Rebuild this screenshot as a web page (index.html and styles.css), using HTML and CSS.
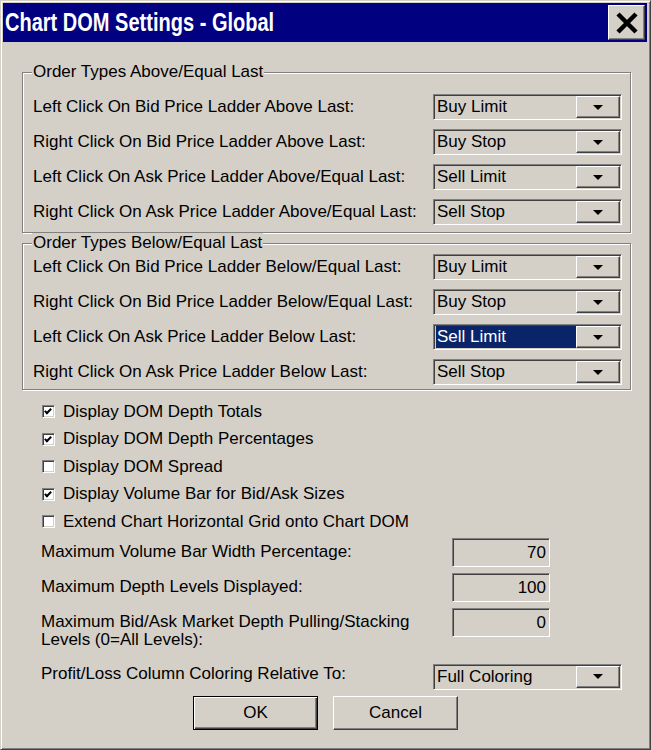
FILE: index.html
```html
<!doctype html>
<html>

<head>
    <link rel="stylesheet" href="styles.css">
</head>

<body>
    <div class="dialog">
        <div class="titlebar">
            <span class="title">Chart DOM Settings - Global</span>
            <span class="close">
                <svg width="22" height="22" viewBox="0 0 22 22">
                    <path d="M2 2 L20 20 M20 2 L2 20" stroke="#000" stroke-width="4.5" fill="none" />
                </svg>
            </span>
        </div>

        <div class="content">
            <fieldset class="group group-above">
                <legend>Order Types Above/Equal Last</legend>
                <div class="row">
                    <span class="label">Left Click On Bid Price Ladder Above Last:</span>
                    <span class="combo"><span class="combo-text">Buy Limit</span><span class="combo-btn"><i class="arrow"></i></span></span>
                </div>
                <div class="row">
                    <span class="label">Right Click On Bid Price Ladder Above Last:</span>
                    <span class="combo"><span class="combo-text">Buy Stop</span><span class="combo-btn"><i class="arrow"></i></span></span>
                </div>
                <div class="row">
                    <span class="label">Left Click On Ask Price Ladder Above/Equal Last:</span>
                    <span class="combo"><span class="combo-text">Sell Limit</span><span class="combo-btn"><i class="arrow"></i></span></span>
                </div>
                <div class="row">
                    <span class="label">Right Click On Ask Price Ladder Above/Equal Last:</span>
                    <span class="combo"><span class="combo-text">Sell Stop</span><span class="combo-btn"><i class="arrow"></i></span></span>
                </div>
            </fieldset>

            <fieldset class="group group-below">
                <legend>Order Types Below/Equal Last</legend>
                <div class="row">
                    <span class="label">Left Click On Bid Price Ladder Below/Equal Last:</span>
                    <span class="combo"><span class="combo-text">Buy Limit</span><span class="combo-btn"><i class="arrow"></i></span></span>
                </div>
                <div class="row">
                    <span class="label">Right Click On Bid Price Ladder Below/Equal Last:</span>
                    <span class="combo"><span class="combo-text">Buy Stop</span><span class="combo-btn"><i class="arrow"></i></span></span>
                </div>
                <div class="row">
                    <span class="label">Left Click On Ask Price Ladder Below Last:</span>
                    <span class="combo"><span class="combo-text selected">Sell Limit</span><span class="combo-btn"><i class="arrow"></i></span></span>
                </div>
                <div class="row">
                    <span class="label">Right Click On Ask Price Ladder Below Last:</span>
                    <span class="combo"><span class="combo-text">Sell Stop</span><span class="combo-btn"><i class="arrow"></i></span></span>
                </div>
            </fieldset>

            <div class="checks">
                <div class="check"><span class="box on"></span>Display DOM Depth Totals</div>
                <div class="check"><span class="box on"></span>Display DOM Depth Percentages</div>
                <div class="check"><span class="box"></span>Display DOM Spread</div>
                <div class="check"><span class="box on"></span>Display Volume Bar for Bid/Ask Sizes</div>
                <div class="check"><span class="box"></span>Extend Chart Horizontal Grid onto Chart DOM</div>
            </div>

            <div class="fields">
                <div class="field">
                    <span class="field-label">Maximum Volume Bar Width Percentage:</span>
                    <span class="num">70</span>
                </div>
                <div class="field">
                    <span class="field-label">Maximum Depth Levels Displayed:</span>
                    <span class="num">100</span>
                </div>
                <div class="field">
                    <span class="field-label">Maximum Bid/Ask Market Depth Pulling/Stacking<br>Levels (0=All Levels):</span>
                    <span class="num">0</span>
                </div>
            </div>

            <div class="profit">
                <span class="field-label">Profit/Loss Column Coloring Relative To:</span>
                <span class="combo"><span class="combo-text">Full Coloring</span><span class="combo-btn"><i class="arrow"></i></span></span>
            </div>

            <div class="buttons">
                <span class="btn default">OK</span>
                <span class="btn">Cancel</span>
            </div>
        </div>
    </div>
</body>

</html>
```

FILE: styles.css
```css
body,
html {
    margin: 0;
    padding: 0;
    font-family: "Liberation Sans", Arial, sans-serif;
    font-size: 17px;
    color: #000;
}

.dialog {
    width: 651px;
    height: 750px;
    box-sizing: border-box;
    background-color: #d4d0c8;
    border: 1px solid;
    border-color: #d4d0c8 #404040 #404040 #d4d0c8;
    box-shadow: inset 1px 1px #fff, inset -1px -1px #808080;
    padding: 2px 3px 2px 2px;
}

/* title bar */
.titlebar {
    height: 39px;
    background-color: #000080;
    display: flex;
    align-items: center;
    justify-content: space-between;
    padding: 0 2px 0 2px;
}

.title {
    color: #fff;
    font-family: "Liberation Sans", Arial, sans-serif;
    font-weight: bold;
    font-size: 26px;
    white-space: nowrap;
    transform: scaleX(0.77);
    transform-origin: left center;
    margin-top: -1px;
}

.close {
    width: 37px;
    height: 35px;
    flex-shrink: 0;
    box-sizing: border-box;
    background-color: #d4d0c8;
    border: 1px solid;
    border-color: #fff #404040 #404040 #fff;
    box-shadow: inset -1px -1px #808080;
    display: flex;
    align-items: center;
    justify-content: center;
}

.close svg {
    display: block;
}

.content {
    padding: 20px 16px 0 19px;
}

/* group boxes */
.group {
    margin: 0;
    padding: 12px 8px 7px 10px;
    border: 1px solid #808080;
    box-shadow: inset 1px 1px #fff, 1px 1px #fff;
}

.group legend {
    padding: 0 1px;
    margin-left: -1px;
    background-color: #d4d0c8;
    line-height: 20px;
}

.group-below {
    margin-top: 0;
    padding-top: 1px;
    padding-bottom: 4px;
}

.row {
    display: flex;
    align-items: center;
    justify-content: space-between;
    height: 26px;
    margin-bottom: 9px;
}

.row:last-child {
    margin-bottom: 0;
}

/* drop-down lists */
.combo {
    width: 189px;
    height: 26px;
    flex-shrink: 0;
    box-sizing: border-box;
    border: 1px solid;
    border-color: #808080 #fff #fff #808080;
    box-shadow: inset 1px 1px #404040, inset -1px -1px #d4d0c8;
    padding: 1px;
    display: flex;
}

.combo-text {
    flex: 1;
    padding-left: 2px;
    display: flex;
    align-items: center;
}

.combo-text.selected {
    background-color: #0a246a;
    color: #fff;
    margin-left: 1px;
    padding-left: 1px;
}

.combo-btn {
    width: 44px;
    box-sizing: border-box;
    border: 1px solid;
    border-color: #fff #404040 #404040 #fff;
    box-shadow: inset -1px -1px #808080;
    display: flex;
    align-items: center;
    justify-content: center;
}

.arrow {
    width: 0;
    height: 0;
    border-left: 5px solid transparent;
    border-right: 5px solid transparent;
    border-top: 5px solid #000;
}

/* check boxes */
.checks {
    padding: 8px 0 0 20px;
}

.check {
    height: 27.5px;
    display: flex;
    align-items: center;
}

.box {
    width: 13px;
    height: 13px;
    box-sizing: border-box;
    border: 1px solid;
    border-color: #808080 #fff #fff #808080;
    box-shadow: inset 1px 1px #404040, inset -1px -1px #d4d0c8;
    background-color: #fff;
    margin-right: 8px;
    position: relative;
}

.box.on::after {
    content: "";
    position: absolute;
    left: 3px;
    top: 1px;
    width: 2px;
    height: 5px;
    border: solid #000;
    border-width: 0 2px 2px 0;
    transform: rotate(45deg);
}

/* numeric fields */
.fields {
    padding: 2px 0 0 19px;
}

.field {
    display: flex;
    align-items: flex-start;
    margin-bottom: 6px;
}

.field-label {
    width: 411px;
    line-height: 18px;
    padding-top: 5px;
}

.num {
    width: 98px;
    height: 29px;
    box-sizing: border-box;
    border: 1px solid;
    border-color: #808080 #fff #fff #808080;
    box-shadow: inset 1px 1px #404040, inset -1px -1px #d4d0c8;
    text-align: right;
    padding: 4px 3px 0 0;
}

.profit {
    display: flex;
    align-items: flex-start;
    justify-content: space-between;
    padding: 9px 9px 0 19px;
}

.profit .field-label {
    padding-top: 1px;
}

/* OK / Cancel */
.buttons {
    display: flex;
    justify-content: center;
    gap: 15px;
    padding: 6px 0 0 0;
    margin-left: -2px;
}

.btn {
    width: 125px;
    height: 34px;
    box-sizing: border-box;
    border: 1px solid;
    border-color: #fff #404040 #404040 #fff;
    box-shadow: inset -1px -1px #808080;
    display: flex;
    align-items: center;
    justify-content: center;
}

.btn.default {
    border: 1px solid #000;
    box-shadow: inset 1px 1px #fff, inset -1px -1px #404040, inset -2px -2px #808080;
}
```
